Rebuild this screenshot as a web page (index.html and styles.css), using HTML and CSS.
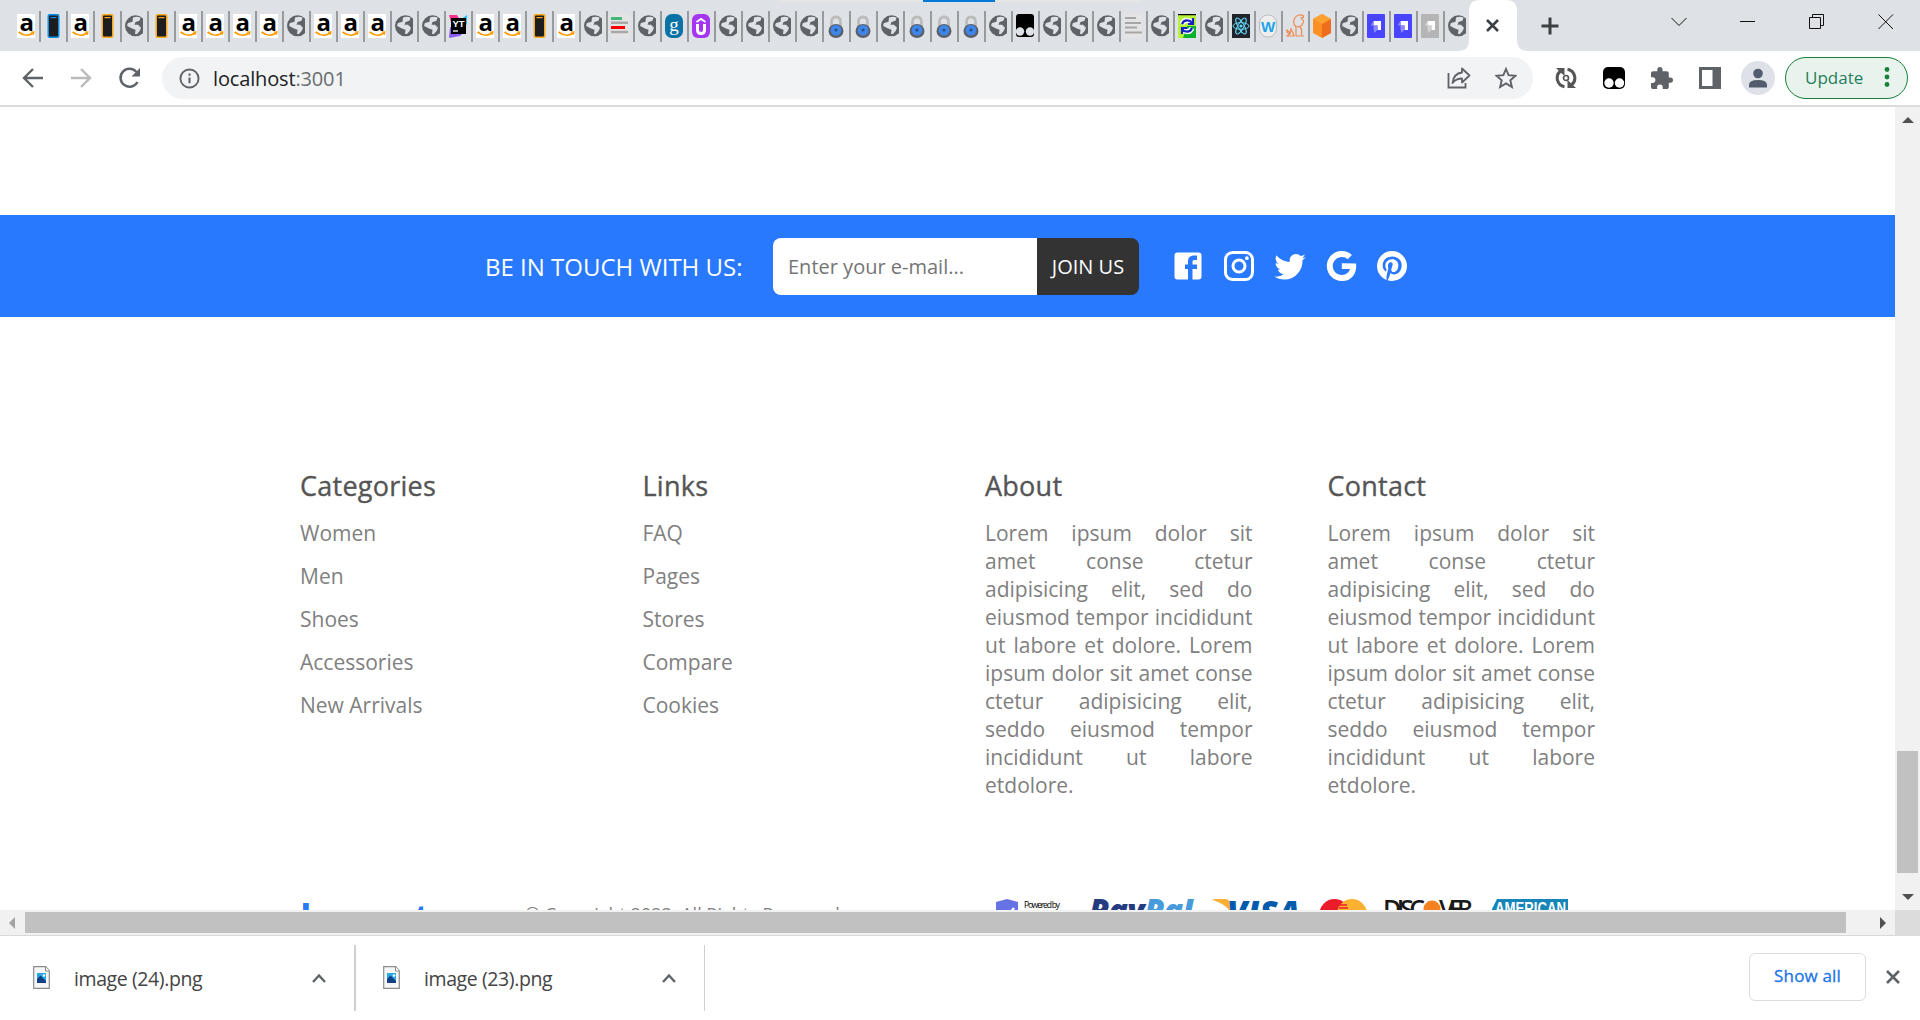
FILE: index.html
```html
<!DOCTYPE html>
<html lang="en">
<head>
<meta charset="utf-8">
<title>Lamastore</title>
<link rel="stylesheet" href="styles.css">
</head>
<body>
<svg class="defs" width="0" height="0">
  <symbol id="amz" viewBox="0 0 18 24"><rect width="18" height="24" fill="#fff"/><text x="9.800" y="16.500" text-anchor="middle" class="amz-a">a</text><path d="M1.500 18q8 6 14.500 1" fill="none" stroke="#f90" stroke-width="1.600"/><path d="M14 18.200l3-.3-.8 3" fill="none" stroke="#f90" stroke-width="1.200"/></symbol>
  <symbol id="phb" viewBox="0 0 18 24"><rect x="3.500" width="12" height="24" rx="2" fill="#0a8fe8"/><rect x="5" y="1.500" width="9" height="21" rx="1" fill="#1d1d1f"/><rect x="6.500" y="3" width="6" height="1.200" fill="#0a8fe8"/></symbol>
  <symbol id="pho" viewBox="0 0 18 24"><rect x="3.500" width="12" height="24" rx="2" fill="#f9a81a"/><rect x="5" y="1.500" width="9" height="21" rx="1" fill="#1d1d1f"/><rect x="6.500" y="3" width="6" height="1.200" fill="#f9a81a"/></symbol>
  <symbol id="globe" viewBox="0 0 18 24"><circle cx="10.500" cy="11.800" r="10.500" fill="#5f6368"/><path d="M8 3.500q4-1.500 7.500 0l-1 3.200-4 1.300-1 2.800h3.500l3 3q-1 4-4 6.200h-2l.5-4.200-3.500-1.300-4.800-2.500q0-2 .8-3l4.500-1.200z" fill="#dee1e6"/></symbol>
  <symbol id="yt" viewBox="0 0 18 24"><path d="M0 1h8l3 5-8 6z" fill="#ff318c"/><path d="M18 1v10L8 8z" fill="#21c1f5"/><path d="M1 13l14 5-4 4-11 2z" fill="#8a5cf6"/><rect x="2" y="4" width="15" height="16"/><text x="9.500" y="12.500" text-anchor="middle" class="yt-t">YT</text><path d="M4 17h5" stroke="#fff" stroke-width="1.300"/></symbol>
  <symbol id="bars" viewBox="0 0 18 24"><rect width="18" height="24" fill="#e4e4e4"/><path d="M0 4.500h11" stroke="#3fb878" stroke-width="3"/><path d="M0 8.700h17M0 18h17" stroke="#a8a8a8" stroke-width="2.500"/><path d="M0 13.500h14" stroke="#f00" stroke-width="3"/></symbol>
  <symbol id="gray" viewBox="0 0 18 24"><rect width="18" height="24" fill="#e4e4e4"/><path d="M1 4h11M1 9h16M1 13.500h12M1 18.500h17" stroke="#a6a6a6" stroke-width="2"/></symbol>
  <symbol id="gd" viewBox="0 0 18 24"><rect width="18" height="24" rx="7" fill="#0a73a5"/><text x="9" y="16.500" text-anchor="middle" class="g-t">g</text></symbol>
  <symbol id="ud" viewBox="0 0 18 24"><rect width="18" height="24" rx="6" fill="#a435f0"/><path d="M5.500 10v6q0 3.500 3.500 3.500t3.500-3.500v-6" fill="none" stroke="#fff" stroke-width="3"/><path d="M4.500 8L9 5l4.500 3" fill="none" stroke="#fff" stroke-width="2"/></symbol>
  <symbol id="lock" viewBox="0 0 18 24"><path d="M4.500 14V8q0-5 4.500-5t4.500 5v6" fill="none" stroke="#bcbcbc" stroke-width="2.800"/><ellipse cx="9" cy="17" rx="7.500" ry="7" fill="#5c6069"/><circle cx="9" cy="16.300" r="5.300" fill="#3f86ea"/><circle cx="9" cy="16" r="1.600" fill="#295085"/></symbol>
  <symbol id="tamper" viewBox="0 0 18 24"><rect width="18" height="23" rx="3"/><circle cx="4" cy="17.500" r="4.200" fill="#dee1e6"/><circle cx="14" cy="17.500" r="4.200" fill="#dee1e6"/><path d="M6 23q3-2 6 0z"/></symbol>
  <symbol id="sync" viewBox="0 0 18 24"><rect width="18" height="24" fill="#b6f23a"/><path d="M9 12h9v12H5z" fill="#0bb32c"/><path d="M0 .5h18" stroke="#000" stroke-width="1.500"/><path d="M4 10q2-5 8-3l2 2M14 14q-2 5-8 3l-2-2" fill="none" stroke="#fff" stroke-width="5"/><path d="M4 10q2-5 8-3l2 2M15 4v6h-5M14 14q-2 5-8 3l-2-2M4 20v-6h5" fill="none" stroke="#1920c4" stroke-width="2.200"/></symbol>
  <symbol id="react" viewBox="0 0 18 24"><rect width="18" height="24" fill="#20232a"/><g fill="none" stroke="#61dafb" stroke-width="1"><ellipse cx="9" cy="12" rx="8" ry="3.300"/><ellipse cx="9" cy="12" rx="9" ry="3" transform="rotate(60 9 12)"/><ellipse cx="9" cy="12" rx="9" ry="3" transform="rotate(120 9 12)"/></g><circle cx="9" cy="12" r="1.600" fill="#61dafb"/></symbol>
  <symbol id="wt" viewBox="0 0 18 24"><rect x=".5" y="1" width="17" height="22" rx="8" fill="#eee" stroke="#bbb"/><text x="9" y="17.500" text-anchor="middle" class="w-t">W</text></symbol>
  <symbol id="squirrel" viewBox="0 0 18 24"><path d="M10 22V13q-3-3-2-7 1-4 5-5 4-.5 5 2l-3 1 3 3-2 4q-3 3-5 1M14 13q3 3 1 9h3M10 22h4M9 22H1l3-2q-4-1-3-4l3 3 1-4 2 4 1 3" fill="none" stroke="#ef8a52" stroke-width="1.200"/></symbol>
  <symbol id="cube" viewBox="0 0 18 24"><path d="M9 0l9 5v14l-9 5-9-5V5z" fill="#ff8f22"/><path d="M9 10l9-5v14l-9 5z" fill="#ee6c1c"/><path d="M9 0l9 5-9 5-9-5z" fill="#ffa033"/></symbol>
  <symbol id="strapi" viewBox="0 0 18 24"><rect width="18" height="24" rx="1" fill="#4945ff"/><path d="M6.500 7H14v9h-3.500v-4.500h-4z" fill="#fff"/><path d="M3.500 11.500l3-4.500v4.500h4V16l-3.500 3v-3H6.500v-4.500z" fill="#8d8aff"/></symbol>
  <symbol id="strapig" viewBox="0 0 18 24"><rect width="18" height="24" rx="1" fill="#b5b5b5"/><path d="M6.500 7H14v9h-3.500v-4.500h-4z" fill="#fff"/><path d="M3.500 11.500l3-4.500v4.500h4V16l-3.500 3v-3H6.500v-4.500z" fill="#d3d3d3"/></symbol>
  <symbol id="file" viewBox="0 0 17 23"><path d="M.7.7h12l3.600 4v17.600H.7z" fill="#f7f7f7" stroke="#8c8c8c" stroke-width="1.200"/><path d="M12.500.7v4.300h4" fill="#fff" stroke="#8c8c8c"/><rect x="4" y="7" width="9" height="10" fill="#29a8e8"/><path d="M4 17v-4l3.500-3.500L13 15v2z" fill="#143f86"/><circle cx="11" cy="9.500" r="1.300" fill="#fff"/></symbol>
</svg>

<header class="tabstrip">
  <i class="top-shade"></i><i class="top-accent"></i>
  <div class="tabs">
    <div class="tab"><svg><use href="#amz"/></svg></div><div class="tab"><svg><use href="#phb"/></svg></div><div class="tab"><svg><use href="#amz"/></svg></div><div class="tab"><svg><use href="#pho"/></svg></div><div class="tab"><svg><use href="#globe"/></svg></div><div class="tab"><svg><use href="#pho"/></svg></div>
    <div class="tab"><svg><use href="#amz"/></svg></div><div class="tab"><svg><use href="#amz"/></svg></div><div class="tab"><svg><use href="#amz"/></svg></div><div class="tab"><svg><use href="#amz"/></svg></div><div class="tab"><svg><use href="#globe"/></svg></div>
    <div class="tab"><svg><use href="#amz"/></svg></div><div class="tab"><svg><use href="#amz"/></svg></div><div class="tab"><svg><use href="#amz"/></svg></div><div class="tab"><svg><use href="#globe"/></svg></div><div class="tab"><svg><use href="#globe"/></svg></div><div class="tab"><svg><use href="#yt"/></svg></div>
    <div class="tab"><svg><use href="#amz"/></svg></div><div class="tab"><svg><use href="#amz"/></svg></div><div class="tab"><svg><use href="#pho"/></svg></div><div class="tab"><svg><use href="#amz"/></svg></div><div class="tab"><svg><use href="#globe"/></svg></div><div class="tab"><svg><use href="#bars"/></svg></div><div class="tab"><svg><use href="#globe"/></svg></div>
    <div class="tab"><svg><use href="#gd"/></svg></div><div class="tab"><svg><use href="#ud"/></svg></div><div class="tab"><svg><use href="#globe"/></svg></div><div class="tab"><svg><use href="#globe"/></svg></div><div class="tab"><svg><use href="#globe"/></svg></div><div class="tab"><svg><use href="#globe"/></svg></div>
    <div class="tab"><svg><use href="#lock"/></svg></div><div class="tab"><svg><use href="#lock"/></svg></div><div class="tab"><svg><use href="#globe"/></svg></div><div class="tab"><svg><use href="#lock"/></svg></div><div class="tab"><svg><use href="#lock"/></svg></div><div class="tab"><svg><use href="#lock"/></svg></div>
    <div class="tab"><svg><use href="#globe"/></svg></div><div class="tab"><svg><use href="#tamper"/></svg></div><div class="tab"><svg><use href="#globe"/></svg></div><div class="tab"><svg><use href="#globe"/></svg></div><div class="tab"><svg><use href="#globe"/></svg></div><div class="tab"><svg><use href="#gray"/></svg></div><div class="tab"><svg><use href="#globe"/></svg></div>
    <div class="tab"><svg><use href="#sync"/></svg></div><div class="tab"><svg><use href="#globe"/></svg></div><div class="tab"><svg><use href="#react"/></svg></div><div class="tab"><svg><use href="#wt"/></svg></div><div class="tab"><svg><use href="#squirrel"/></svg></div><div class="tab"><svg><use href="#cube"/></svg></div><div class="tab"><svg><use href="#globe"/></svg></div>
    <div class="tab"><svg><use href="#strapi"/></svg></div><div class="tab"><svg><use href="#strapi"/></svg></div><div class="tab"><svg><use href="#strapig"/></svg></div><div class="tab last"><svg><use href="#globe"/></svg></div>
  </div>
  <svg class="active-tab" viewBox="0 0 70 51"><path d="M0 51q11 0 11-11V11Q11 0 22 0h26q11 0 11 11v29q0 11 11 11z" fill="#fff"/><path d="M29 20l11 11M40 20L29 31" stroke="#3c4043" stroke-width="2.600" fill="none"/></svg>
  <svg class="new-tab" viewBox="0 0 18 18"><path d="M9 .5v17M.5 9h17" stroke="#3c4043" stroke-width="3"/></svg>
  <div class="window-controls">
    <svg viewBox="0 0 16 16"><path d="M.5 4L8 11.500 15.500 4" /></svg>
    <svg viewBox="0 0 16 16"><path d="M0 7.500h15"/></svg>
    <svg viewBox="0 0 16 16"><path d="M.5 3.500h11v11H.5zM3.500 3.500v-3h11v11h-3"/></svg>
    <svg viewBox="0 0 16 16"><path d="M.5.500l14.500 14.500M15 .5L.5 15"/></svg>
  </div>
</header>

<nav class="toolbar">
  <div class="nav-buttons">
    <svg viewBox="0 0 22 22"><path d="M21 11H2M11 2l-9 9 9 9" fill="none" stroke="#5f6368" stroke-width="2.400"/></svg>
    <svg viewBox="0 0 22 22"><path d="M1 11h19M11 2l9 9-9 9" fill="none" stroke="#bababd" stroke-width="2.400"/></svg>
    <svg viewBox="0 0 22 22"><path d="M19.500 15A9 9 0 1 1 18.500 5" fill="none" stroke="#5f6368" stroke-width="2.500"/><path d="M22 1v8.500h-8.500z" fill="#5f6368"/></svg>
  </div>
  <div class="omnibox">
    <svg class="info" viewBox="0 0 22 22"><circle cx="11" cy="11" r="9.500" fill="none" stroke="#5f6368" stroke-width="2"/><path d="M11 10v6M11 5.800v2.300" stroke="#5f6368" stroke-width="2.200"/></svg>
    <span class="url">localhost<b>:3001</b></span>
    <svg class="share" viewBox="0 0 24 24"><path d="M1.500 7v14.500h17V17" fill="none" stroke="#5f6368" stroke-width="1.800"/><path d="M15 2.500l7.500 7-7.500 7v-4q-6 0-9.500 4.500 1-9.500 9.500-10.500z" fill="none" stroke="#5f6368" stroke-width="1.800" stroke-linejoin="round"/></svg>
    <svg class="star" viewBox="0 0 22 22"><path d="M11 2l2.600 6.200 6.900.6-5.200 4.500 1.600 6.700-5.900-3.600L5.100 20l1.600-6.700L1.500 8.800l6.900-.6z" fill="none" stroke="#5f6368" stroke-width="1.900"/></svg>
  </div>
  <div class="extensions">
    <svg viewBox="0 0 22 22"><path d="M9.500 19.800A9 9 0 0 1 5.500 4M12.500 2.200a9 9 0 0 1 4 15.800" fill="none" stroke="#555" stroke-width="3"/><path d="M1 1h8.500v8zM21 21h-8.500v-8z" fill="#555"/><circle cx="11" cy="11" r="2.500" fill="none" stroke="#555" stroke-width="1.700"/></svg>
    <svg viewBox="0 0 22 22"><rect width="22" height="22" rx="5"/><circle cx="6" cy="16" r="4.700" fill="#fff"/><circle cx="16.500" cy="16" r="4.700" fill="#fff"/></svg>
    <svg viewBox="2 1 21 21"><path fill="#5f6368" d="M20.500 11H19V7c0-1.100-.9-2-2-2h-4V3.500a2.500 2.500 0 0 0-5 0V5H4c-1.100 0-2 .9-2 2v3.800h1.500a2.700 2.700 0 0 1 0 5.400H2V20c0 1.100.9 2 2 2h3.800v-1.500a2.700 2.700 0 0 1 5.400 0V22H17c1.100 0 2-.9 2-2v-4h1.500a2.500 2.500 0 0 0 0-5z"/></svg>
    <svg viewBox="0 0 22 22"><path d="M0 0h22v22H0zM3 3v16h10.500V3z" fill="#5f6368" fill-rule="evenodd"/></svg>
    <svg class="avatar" viewBox="0 0 34 34"><circle cx="17" cy="17" r="17" fill="#dee1e8"/><circle cx="17" cy="12.500" r="4.800" fill="#525c6e"/><path d="M8 26.500v-2.500q0-5 9-5t9 5v2.500z" fill="#525c6e"/></svg>
  </div>
  <div class="update"><span>Update</span><svg viewBox="0 0 6 20"><circle cx="3" cy="2.500" r="2.400"/><circle cx="3" cy="10" r="2.400"/><circle cx="3" cy="17.500" r="2.400"/></svg></div>
</nav>

<main class="viewport">
  <div class="page">
    <section class="contact">
      <span class="contact-title">BE IN TOUCH WITH US:</span>
      <div class="mail"><input type="text" placeholder="Enter your e-mail..."><button>JOIN US</button></div>
      <div class="social">
        <svg viewBox="0 0 24 24"><path d="M5 3h14a2 2 0 0 1 2 2v14a2 2 0 0 1-2 2H5a2 2 0 0 1-2-2V5a2 2 0 0 1 2-2m13 2h-2.500A3.500 3.500 0 0 0 12 8.500V11h-2v3h2v7h3v-7h3v-3h-3V9a1 1 0 0 1 1-1h2V5z"/></svg>
        <svg viewBox="0 0 24 24"><path d="M7.800 2h8.400C19.400 2 22 4.600 22 7.800v8.400a5.800 5.800 0 0 1-5.800 5.800H7.800C4.600 22 2 19.400 2 16.200V7.800A5.800 5.800 0 0 1 7.800 2m-.2 2A3.600 3.600 0 0 0 4 7.600v8.800C4 18.390 5.610 20 7.600 20h8.800a3.600 3.600 0 0 0 3.600-3.600V7.600C20 5.610 18.390 4 16.400 4H7.600m9.650 1.500a1.250 1.250 0 0 1 1.250 1.250A1.250 1.250 0 0 1 17.250 8 1.250 1.250 0 0 1 16 6.750a1.250 1.250 0 0 1 1.250-1.250M12 7a5 5 0 0 1 5 5 5 5 0 0 1-5 5 5 5 0 0 1-5-5 5 5 0 0 1 5-5m0 2a3 3 0 0 0-3 3 3 3 0 0 0 3 3 3 3 0 0 0 3-3 3 3 0 0 0-3-3z"/></svg>
        <svg viewBox="0 0 24 24"><path d="M22.460 6c-.77.35-1.600.58-2.460.69.88-.53 1.560-1.370 1.880-2.380-.83.5-1.750.85-2.720 1.050C18.370 4.500 17.260 4 16 4c-2.350 0-4.270 1.920-4.270 4.290 0 .34.04.67.11.98C8.280 9.090 5.110 7.380 3 4.790c-.37.63-.58 1.370-.58 2.150 0 1.490.75 2.810 1.910 3.560-.71 0-1.370-.2-1.950-.5v.03c0 2.080 1.480 3.820 3.440 4.210a4.220 4.220 0 0 1-1.930.07 4.280 4.280 0 0 0 4 2.980 8.521 8.521 0 0 1-5.330 1.840c-.34 0-.68-.02-1.020-.06C3.440 20.290 5.700 21 8.120 21 16 21 20.330 14.460 20.330 8.790c0-.19 0-.37-.01-.56.84-.6 1.560-1.360 2.140-2.230z"/></svg>
        <svg viewBox="0 0 24 24"><path d="M12.545 10.239v3.821h5.445c-.712 2.315-2.647 3.972-5.445 3.972-3.332 0-6.033-2.701-6.033-6.032s2.701-6.032 6.033-6.032c1.498 0 2.866.549 3.921 1.453l2.814-2.814C17.503 2.988 15.139 2 12.545 2 7.021 2 2.543 6.477 2.543 12s4.478 10 10.002 10c8.396 0 10.249-7.850 9.426-11.748z"/></svg>
        <svg viewBox="0 0 24 24"><path d="M9.040 21.540c.96.29 1.930.46 2.960.46a10 10 0 0 0 10-10A10 10 0 0 0 12 2 10 10 0 0 0 2 12c0 4.250 2.670 7.900 6.440 9.340-.09-.78-.18-2.070 0-2.960l1.150-4.940s-.29-.58-.29-1.500c0-1.380.86-2.410 1.840-2.410.86 0 1.260.63 1.260 1.440 0 .86-.57 2.090-.86 3.270-.17.98.52 1.840 1.520 1.840 1.780 0 3.160-1.900 3.160-4.580 0-2.400-1.720-4.040-4.190-4.040-2.820 0-4.480 2.100-4.480 4.310 0 .86.28 1.730.74 2.300.09.06.09.14.06.29l-.29 1.090c0 .17-.11.23-.28.11-1.280-.56-2.020-2.380-2.020-3.850 0-3.160 2.240-6.030 6.560-6.030 3.440 0 6.120 2.470 6.120 5.750 0 3.440-2.130 6.200-5.180 6.200-.97 0-1.920-.52-2.260-1.130l-.67 2.370c-.23.86-.86 2.010-1.290 2.700z"/></svg>
      </div>
    </section>
    <footer class="footer">
      <div class="columns">
        <div class="col"><h2>Categories</h2><ul><li>Women</li><li>Men</li><li>Shoes</li><li>Accessories</li><li>New Arrivals</li></ul></div>
        <div class="col"><h2>Links</h2><ul><li>FAQ</li><li>Pages</li><li>Stores</li><li>Compare</li><li>Cookies</li></ul></div>
        <div class="col"><h2>About</h2><p>Lorem ipsum dolor sit amet conse ctetur adipisicing elit, sed do eiusmod tempor incididunt ut labore et dolore. Lorem ipsum dolor sit amet conse ctetur adipisicing elit, seddo eiusmod tempor incididunt ut labore etdolore.</p></div>
        <div class="col"><h2>Contact</h2><p>Lorem ipsum dolor sit amet conse ctetur adipisicing elit, sed do eiusmod tempor incididunt ut labore et dolore. Lorem ipsum dolor sit amet conse ctetur adipisicing elit, seddo eiusmod tempor incididunt ut labore etdolore.</p></div>
      </div>
      <div class="bottom">
        <span class="logo">lamastore</span>
        <span class="copyright">© Copyright 2023. All Rights Reserved</span>
        <svg class="payment" viewBox="0 0 580 40">
          <path d="M2 3l11-3 11 3v15q0 8-11 14Q2 26 2 18z" fill="#6772e5"/><path d="M8 15l4 4 8-10" fill="none" stroke="#fff" stroke-width="2.500"/>
          <text x="30" y="8.500" class="powered" textLength="36">Powered by</text><text x="33" y="24" class="stripe" textLength="34">stripe</text>
          <text x="95" y="23" class="paypal" textLength="104"><tspan fill="#253b80">Pay</tspan><tspan fill="#469bdb">Pal</tspan></text>
          <path d="M219 0h12q4 0 5 4l2 12q-4-10-19-15z" fill="#fbb034"/><text x="233" y="25.500" class="visa" textLength="73">VISA</text>
          <circle cx="340.500" cy="15" r="15" fill="#eb1c2a"/><circle cx="358" cy="15" r="15" fill="#fcb131"/><path d="M346 6h7M345 9h9M344 12h10" stroke="#eb1c2a" stroke-width="1.300"/>
          <text x="389" y="19" class="disc" textLength="42">DISC</text><text x="445" y="19" class="disc" textLength="34">VER</text><circle cx="438" cy="10" r="8.500" fill="#f58220"/>
          <path d="M503 0h71v32h-76V10z" fill="#1686b8"/><text x="501" y="14.500" class="amex" textLength="71" lengthAdjust="spacingAndGlyphs">AMERICAN</text>
        </svg>
      </div>
    </footer>
  </div>
  <div class="vbar"><i class="up"></i><i class="thumb"></i><i class="down"></i></div>
  <div class="hbar"><i class="left"></i><i class="thumb"></i><i class="right"></i></div>
  <div class="corner"></div>
</main>

<aside class="downloads">
  <div class="download"><svg class="file"><use href="#file"/></svg><span>image (24).png</span><svg class="chev" viewBox="0 0 14 10"><path d="M1 9l6-6.500L13 9"/></svg></div>
  <div class="download second"><svg class="file"><use href="#file"/></svg><span>image (23).png</span><svg class="chev" viewBox="0 0 14 10"><path d="M1 9l6-6.500L13 9"/></svg></div>
  <button class="show-all">Show all</button>
  <svg class="close" viewBox="0 0 14 14"><path d="M1 1l12 12M13 1L1 13" stroke="#5f6368" stroke-width="2.600"/></svg>
</aside>
</body>
</html>
```
FILE: styles.css
```css
* { box-sizing: border-box; }
body { margin: 0; width: 1920px; height: 1020px; overflow: hidden; display: flex; flex-direction: column; background: #fff; font-family: "Open Sans", "Noto Sans", sans-serif; }
svg { display: block; flex: none; }
.defs { display: none; }

/* favicons */
.amz-a { font: bold 24px "Open Sans", sans-serif; }
.yt-t { font: bold 9.5px "Liberation Sans", sans-serif; fill: #fff; }
.g-t { font: 19px "Liberation Serif", serif; fill: #fff; }
.w-t { font: bold 15px "Liberation Sans", sans-serif; fill: #1ba4ea; }

/* tab strip */
.tabstrip { position: relative; flex: none; height: 51px; background: #dee1e6; display: flex; align-items: flex-start; padding-left: 14px; }
.top-shade { position: absolute; left: 778px; top: 0; width: 363px; height: 2px; background: #e5e5e5; }
.top-accent { position: absolute; left: 923px; top: 0; width: 72px; height: 2px; background: #0078d7; }
.tabs { display: flex; padding-top: 11px; }
.tab { width: 27px; height: 31px; padding: 3px 0 0 3px; border-right: 2px solid #989a9e; }
.tab svg { width: 18px; height: 24px; }
.tab.last { width: 21px; border: 0; }
.active-tab { width: 70px; height: 51px; margin-left: -8px; }
.new-tab { width: 18px; height: 18px; margin: 17px 0 0 13px; }
.window-controls { display: flex; gap: 53px; margin: 14px 0 0 112px; }
.window-controls svg { width: 16px; height: 16px; fill: none; stroke: #111; stroke-width: 1; }

/* toolbar */
.toolbar { flex: none; height: 56px; border-bottom: 2px solid #dadcdd; display: flex; align-items: center; padding: 0 12px 0 22px; }
.nav-buttons { display: flex; gap: 26px; }
.nav-buttons svg { width: 22px; height: 22px; }
.omnibox { width: 1371px; height: 42px; margin-left: 22px; background: #f1f3f4; border-radius: 21px; display: flex; align-items: center; padding: 0 16px 0 17px; }
.info { width: 21px; height: 21px; }
.url { flex: 1; margin-left: 13px; font-size: 20px; letter-spacing: -.15px; color: #202124; }
.url b { font-weight: 400; color: #6a6d71; }
.share { width: 24px; height: 24px; margin-right: 24px; }
.star { width: 22px; height: 22px; }
.extensions { display: flex; align-items: center; gap: 26px; margin-left: 22px; }
.extensions svg { width: 22px; height: 22px; }
.extensions .avatar { width: 34px; height: 34px; margin-left: -6px; }
.update { width: 123px; height: 42px; margin-left: auto; border: 1.5px solid #188038; border-radius: 21px; background: #e9f3ee; display: flex; align-items: center; justify-content: space-between; padding: 0 17px 2px 19px; font-size: 17px; color: #257e5a; }
.update svg { width: 6px; height: 20px; fill: #188038; }

/* page area and scrollbars */
.viewport { flex: none; height: 829px; display: grid; grid-template: 803px 26px / 1895px 25px; }
.page { overflow: hidden; height: 803px; padding-top: 108px; }
.vbar, .hbar { background: #f1f1f1; display: flex; align-items: center; }
.vbar { flex-direction: column; padding: 10px 0 8px; }
.vbar .thumb { width: 21px; height: 122px; margin-top: 628px; background: #c1c1c1; }
.up, .down { border: 6px solid transparent; border-top: 0; border-bottom: 6px solid #505050; }
.down { margin-top: auto; border-top: 6px solid #505050; border-bottom: 0; margin-bottom: 2px; }
.hbar { border-bottom: 1px solid #d7d9da; padding: 0 9px 0 9px; }
.hbar .thumb { width: 1821px; height: 21px; margin-left: 10px; background: #c1c1c1; }
.left { border: 6px solid transparent; border-left: 0; border-right: 6px solid #a3a3a3; }
.right { margin-left: auto; border: 6px solid transparent; border-right: 0; border-left: 6px solid #505050; }
.corner { background: #dcdcdc; }

/* newsletter band */
.contact { height: 102px; background: #2979ff; color: #fff; display: flex; align-items: center; padding-left: 485px; }
.contact-title { width: 288px; font-size: 24px; white-space: nowrap; }
.mail { display: flex; width: 366px; height: 57px; }
.mail input { width: 264px; border: 0; padding: 0 15px; border-radius: 8px 0 0 8px; font: 20px "Open Sans", sans-serif; }
.mail input::placeholder { color: #757575; }
.mail button { width: 102px; border: 0; padding: 0; background: #333; color: #fff; border-radius: 0 8px 8px 0; font: 20px "Open Sans", sans-serif; }
.social { display: flex; gap: 15px; margin-left: 31px; }
.social svg { width: 36px; height: 36px; fill: #fff; }

/* footer */
.footer { margin: 150px 300px 0; }
.columns { display: grid; grid-template-columns: repeat(4, 1fr); column-gap: 75px; height: 431px; }
.col h2 { margin: 0; font-size: 27px; font-weight: 500; line-height: 37px; letter-spacing: .25px; color: #555; -webkit-text-stroke: .35px #555; }
.col ul { list-style: none; margin: 15px 0 0; padding: 0; display: grid; gap: 15px; }
.col li, .col p { font-size: 21px; line-height: 28px; color: gray; }
.col p { margin: 15px 0 0; text-align: justify; }
.bottom { display: flex; align-items: flex-start; }
.logo { width: 225px; margin-top: -6px; font-size: 38px; line-height: 50px; font-weight: 700; color: #2979ff; }
.copyright { width: 469px; margin-top: 4px; font-size: 18px; line-height: 25px; color: gray; }
.payment { width: 580px; height: 40px; margin-top: 1px; }
.powered { font: 8.5px "Open Sans", sans-serif; }
.stripe { font: bold 15px "Open Sans", sans-serif; }
.paypal { font: italic 800 32px "Open Sans", sans-serif; }
.visa { font: italic 800 33px "Open Sans", sans-serif; fill: #005bac; }
.disc { font: 600 25px "Open Sans", sans-serif; fill: #1a1a1a; }
.amex { font: bold 17px "Liberation Sans", sans-serif; fill: #fff; }

/* downloads shelf */
.downloads { flex: none; height: 84px; display: flex; align-items: center; padding-right: 20px; }
.download { width: 356px; height: 66px; border-right: 2px solid #cfcfcf; display: flex; align-items: center; padding: 0 28px 0 33px; font-size: 19.5px; letter-spacing: -.4px; color: #444; }
.download.second { width: 349px; padding-left: 27px; border-right-width: 1px; }
.file { width: 17px; height: 23px; margin-bottom: 2px; }
.download span { margin-left: 24px; }
.chev { width: 14px; height: 10px; margin-left: auto; fill: none; stroke: #5f6368; stroke-width: 2.4; }
.show-all { width: 117px; height: 48px; margin: 0 0 2px auto; border: 1px solid #dadce0; border-radius: 6px; background: #fff; color: #1a73e8; font: 500 17px "Open Sans", sans-serif; letter-spacing: .15px; -webkit-text-stroke: .3px #1a73e8; padding-bottom: 4px; }
.close { width: 14px; height: 14px; margin: 0 0 2px 20px; }
```
